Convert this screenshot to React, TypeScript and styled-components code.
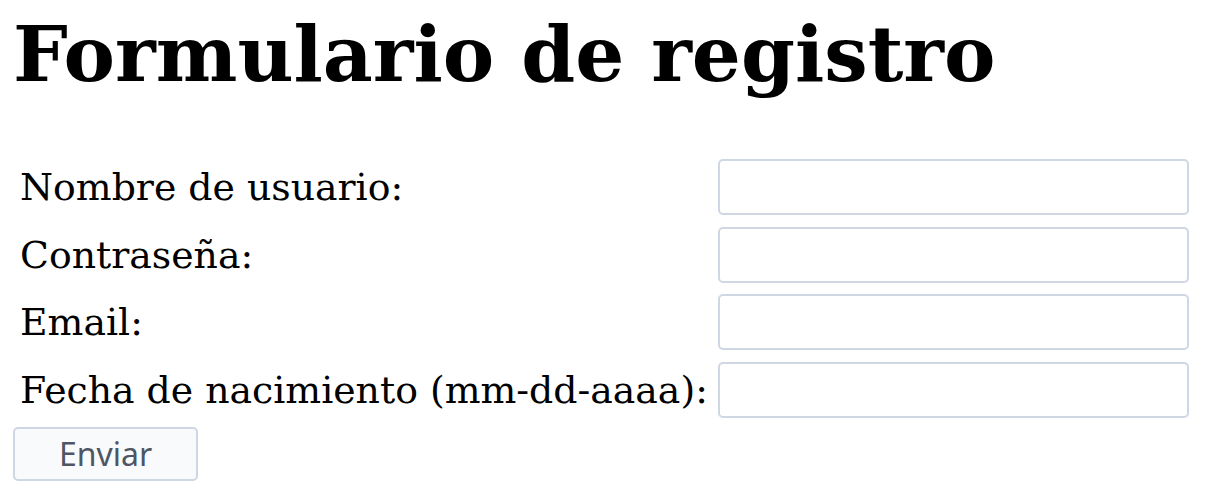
import React from "react";
import styled, { createGlobalStyle } from "styled-components";

const GlobalStyle = createGlobalStyle`
  html, body { margin: 0; padding: 0; background: #ffffff; }
`;

const Page = styled.main`
  padding: 0 13px;
  font-family: "DejaVu Serif", serif;
  color: #000;
`;

const Title = styled.h1`
  margin: 9px 0 0;
  font-family: "DejaVu Serif", serif;
  font-weight: 700;
  font-size: 77.2px;
  line-height: normal;
`;

const Form = styled.form`
  margin-top: 60px;
  display: flex;
  flex-direction: column;
  align-items: flex-start;
  gap: 9px;
`;

const Fields = styled.div`
  display: grid;
  grid-template-columns: 705px 471px;
  row-gap: 11.5px;
  align-items: center;
`;

const Label = styled.label`
  padding-left: 7px;
  font-family: "DejaVu Serif", serif;
  font-size: 37.8px;
  line-height: normal;
  white-space: nowrap;
`;

const Input = styled.input`
  box-sizing: border-box;
  width: 471px;
  height: 56px;
  margin: 0;
  border: 2px solid #cfd7e5;
  border-radius: 5px;
  background: #ffffff;
  font: 30px "Noto Sans", sans-serif;
  padding: 0 10px;
  outline: none;
`;

const Button = styled.button`
  box-sizing: border-box;
  width: 185px;
  height: 54px;
  margin: 0;
  border: 2px solid #cfd7e5;
  border-radius: 5px;
  background: #f9fafb;
  color: #4f5563;
  font-family: "Noto Sans", sans-serif;
  font-size: 32px;
  padding: 0;
  cursor: pointer;
`;

const fields = [
  { id: "usuario", label: "Nombre de usuario:", type: "text" },
  { id: "contrasena", label: "Contraseña:", type: "password" },
  { id: "email", label: "Email:", type: "email" },
  { id: "nacimiento", label: "Fecha de nacimiento (mm-dd-aaaa):", type: "text" },
];

export default function App() {
  return (
    <>
      <GlobalStyle />
      <Page>
        <Title>Formulario de registro</Title>
        <Form onSubmit={(e) => e.preventDefault()}>
          <Fields>
            {fields.map((f) => (
              <React.Fragment key={f.id}>
                <Label htmlFor={f.id}>{f.label}</Label>
                <Input id={f.id} name={f.id} type={f.type} />
              </React.Fragment>
            ))}
          </Fields>
          <Button type="submit">Enviar</Button>
        </Form>
      </Page>
    </>
  );
}
